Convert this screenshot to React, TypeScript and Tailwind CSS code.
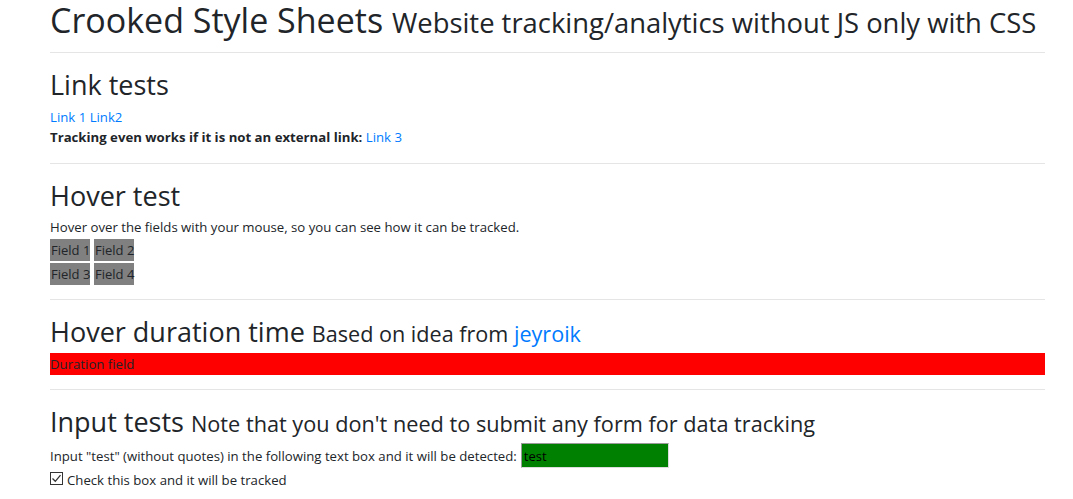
const Rule = ({ className }: { className: string }) => (
  <hr className={`border-black/10 ${className}`} />
);

const Field = ({ label }: { label: string }) => (
  <span className="h-[22px] w-[40px] bg-[#808080] pl-px leading-[22px] whitespace-nowrap">{label}</span>
);

export default function App() {
  return (
    <div
      className="min-h-screen bg-white pl-[50px] pr-[28px] text-[#212529]"
      style={{ fontFamily: '"Open Sans", "Noto Sans", sans-serif' }}
    >
      <h1 className="text-[34px] leading-[41px] whitespace-nowrap">
        Crooked Style Sheets{" "}
        <small className="text-[27.4px] leading-none">Website tracking/analytics without JS only with CSS</small>
      </h1>
      <Rule className="mt-[11px]" />

      <h2 className="mt-[15px] text-[27px] leading-[33px]">Link tests</h2>
      <div className="mt-[6px] text-[13.2px] leading-[20px]">
        <a className="text-[#007bff]" href="#">Link 1</a>{" "}
        <a className="text-[#007bff]" href="#">Link2</a>
      </div>
      <div className="text-[13.2px] leading-[20px]">
        <b>Tracking even works if it is not an external link:</b>{" "}
        <a className="text-[#007bff]" href="#">Link 3</a>
      </div>
      <Rule className="mt-[16px]" />

      <h2 className="mt-[15px] text-[27px] leading-[33px]">Hover test</h2>
      <p className="mt-[5px] text-[13.2px] leading-[20px]">
        Hover over the fields with your mouse, so you can see how it can be tracked.
      </p>
      <div className="mt-[2px] flex flex-col gap-[2px] text-[13px]">
        <div className="flex gap-[4px]">
          <Field label="Field 1" />
          <Field label="Field 2" />
        </div>
        <div className="flex gap-[4px]">
          <Field label="Field 3" />
          <Field label="Field 4" />
        </div>
      </div>
      <Rule className="mt-[14px]" />

      <h2 className="mt-[15px] text-[27px] leading-[33px]">
        Hover duration time{" "}
        <small className="text-[21.6px] leading-none">
          Based on idea from <a className="text-[#007bff]" href="#">jeyroik</a>
        </small>
      </h2>
      <div className="mt-[5px] h-[22px] bg-[#ff0000] text-[13.2px] leading-[22px]">Duration field</div>
      <Rule className="mt-[14px]" />

      <h2 className="mt-[15px] text-[27px] leading-[33px] whitespace-nowrap">
        Input tests{" "}
        <small className="text-[21.7px] leading-none">Note that you don't need to submit any form for data tracking</small>
      </h2>
      <div className="mt-[5px] flex items-center text-[13.2px] leading-[20px]">
        <span>Input "test" (without quotes) in the following text box and it will be detected:</span>
        <input
          className="ml-[4px] h-[25px] w-[148px] border border-t-[#9a9a9a] border-l-[#9a9a9a] border-r-[#dcdcdc] border-b-[#dcdcdc] bg-[#008000] px-[2px] text-[13px] text-black outline-none"
          defaultValue="test"
        />
      </div>
      <label className="mt-[2px] flex items-start gap-[4px] text-[13.2px] leading-[20px]">
        <span className="mt-[2px] flex h-[13px] w-[13px] items-center justify-center border border-[#333] bg-white">
          <svg viewBox="0 0 11 11" className="h-[11px] w-[11px]" fill="none" stroke="#333" strokeWidth="1.3">
            <path d="M1.5 5.5 L4.3 8.3 L9.5 2.2" />
          </svg>
        </span>
        Check this box and it will be tracked
      </label>
    </div>
  );
}
